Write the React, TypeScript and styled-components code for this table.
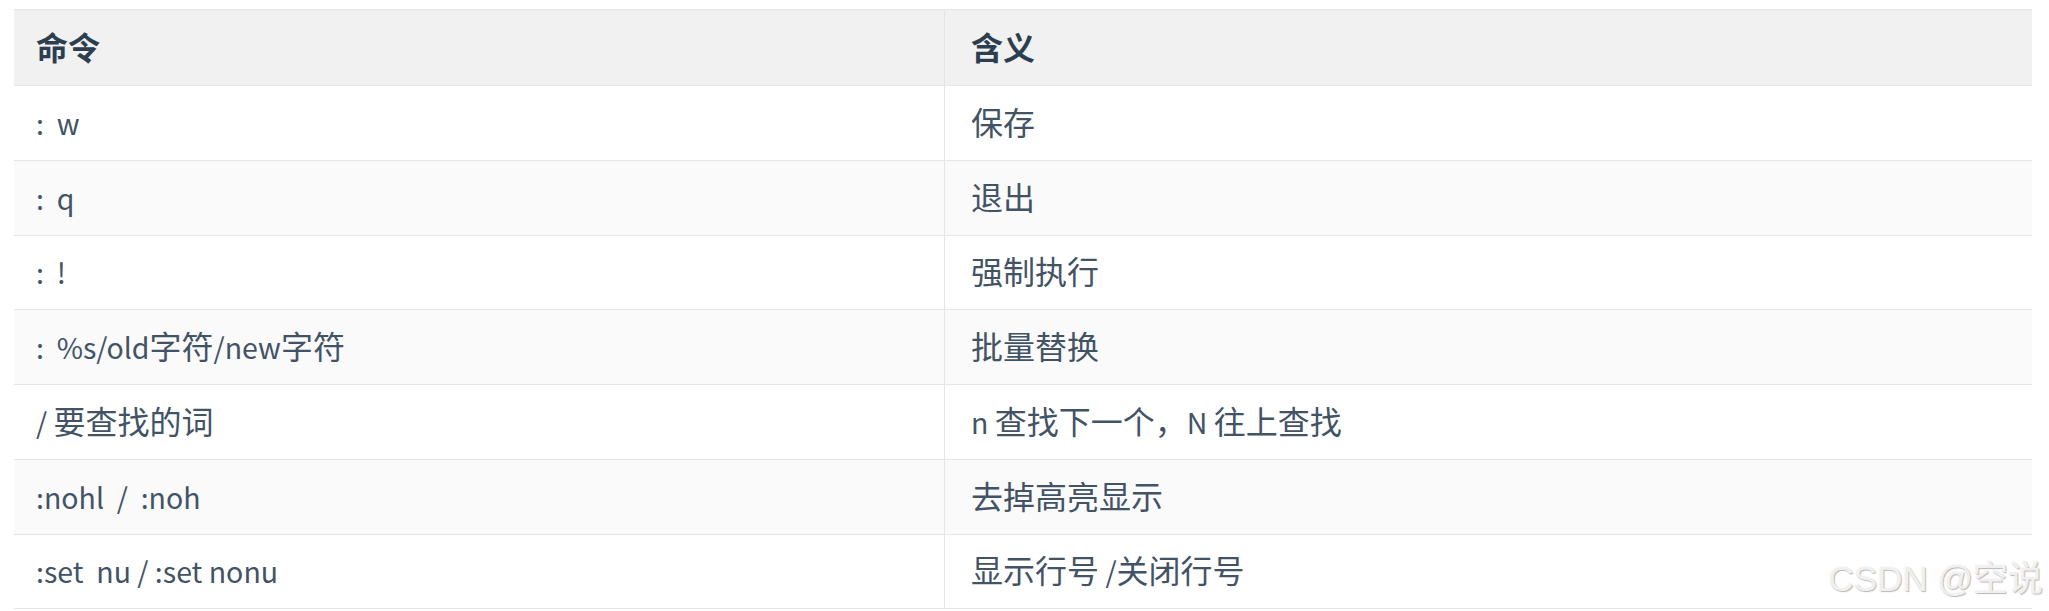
import React from "react";
import styled, { createGlobalStyle } from "styled-components";

const GlobalStyle = createGlobalStyle`
  html, body {
    margin: 0;
    padding: 0;
    background: #ffffff;
  }
  body {
    font-family: "Noto Sans CJK SC", sans-serif;
  }
`;

const Page = styled.div`
  position: relative;
  width: 2049px;
  height: 611px;
  overflow: hidden;
  padding: 9px 17px 0 14px;
  box-sizing: border-box;
`;

const Table = styled.div`
  display: flex;
  flex-direction: column;
  width: 2018px;
`;

const Row = styled.div<{ $head?: boolean; $alt?: boolean }>`
  display: grid;
  grid-template-columns: 930px 1fr;
  box-sizing: border-box;
  height: ${(p) => (p.$head ? "77px" : "74.75px")};
  border-top: ${(p) => (p.$head ? "1px solid #e6e6e6" : "none")};
  border-bottom: 1px solid #e6e6e6;
  background: ${(p) => (p.$head ? "#f1f1f1" : p.$alt ? "#fafafa" : "#ffffff")};
`;

const Cell = styled.div<{ $head?: boolean; $second?: boolean }>`
  display: flex;
  align-items: center;
  padding-left: ${(p) => (p.$second ? "26px" : "22px")};
  padding-bottom: 3px;
  border-left: ${(p) => (p.$second ? "1px solid #e1e6ec" : "none")};
  font-family: "Noto Sans CJK SC", sans-serif;
  font-size: 32px;
  font-weight: ${(p) => (p.$head ? 700 : 400)};
  color: ${(p) => (p.$head ? "#2c3e50" : "#435366")};
  white-space: pre;
`;

const Text = styled.span`
  line-height: 1.4;
`;

// latin runs render a little smaller than the cjk ones
const Latin = styled.span`
  font-size: 28.5px;
`;

const Watermark = styled.div`
  position: absolute;
  right: 6px;
  top: 550px;
  font-family: "Liberation Sans", "Noto Sans CJK SC", sans-serif;
  font-size: 35px;
  color: #f0f0f0;
  text-shadow: 1px 1px 1px #b8b8b8, -1px -1px 0 #fafafa, 0 0 1px #c8c8c8;
  pointer-events: none;
`;

const rows: [string, string][] = [
  [":\u00a0 w", "保存"],
  [":\u00a0 q", "退出"],
  [":\u00a0 !", "强制执行"],
  [":\u00a0 %s/old字符/new字符", "批量替换"],
  ["/ 要查找的词", "n 查找下一个，N 往上查找"],
  [":nohl \u00a0/ \u00a0:noh", "去掉高亮显示"],
  [":set \u00a0nu / :set nonu", "显示行号 /关闭行号"],
];

const cjk = /[\u3000-\u9fff\uff00-\uffef]/;

function Mixed({ value }: { value: string }) {
  const parts = value.match(/[\u3000-\u9fff\uff00-\uffef]+|[^\u3000-\u9fff\uff00-\uffef]+/g) || [];
  return (
    <Text>
      {parts.map((part, i) =>
        cjk.test(part) ? <span key={i}>{part}</span> : <Latin key={i}>{part}</Latin>
      )}
    </Text>
  );
}

export default function App() {
  return (
    <Page>
      <GlobalStyle />
      <Table>
        <Row $head>
          <Cell $head>命令</Cell>
          <Cell $head $second>
            含义
          </Cell>
        </Row>
        {rows.map(([cmd, desc], i) => (
          <Row key={cmd} $alt={i % 2 === 1}>
            <Cell>
              <Mixed value={cmd} />
            </Cell>
            <Cell $second>
              <Mixed value={desc} />
            </Cell>
          </Row>
        ))}
      </Table>
      <Watermark>CSDN @空说</Watermark>
    </Page>
  );
}
